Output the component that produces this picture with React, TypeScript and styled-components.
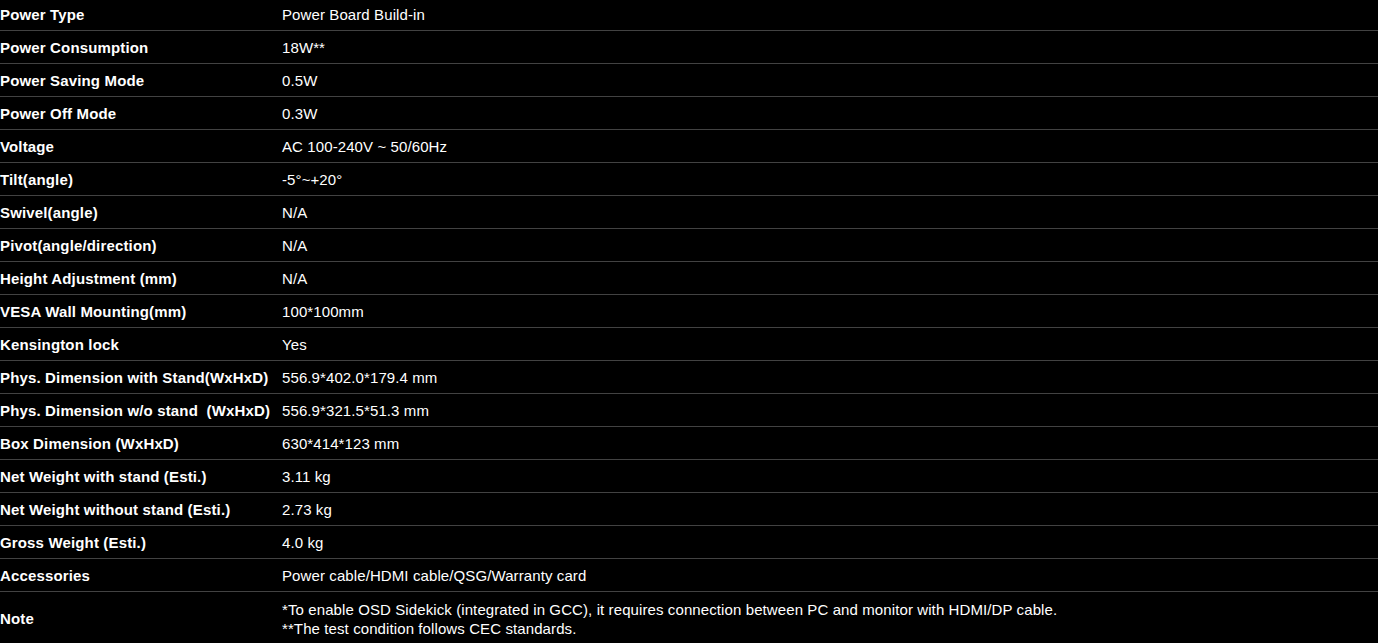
import React from "react";
import styled, { createGlobalStyle } from "styled-components";

const Global = createGlobalStyle`
  html, body { margin: 0; padding: 0; background: #000; }
  body { font-family: "Liberation Sans", Arial, sans-serif; overflow: hidden; }
`;

const Table = styled.div`
  display: flex;
  flex-direction: column;
  margin-top: -2px;
  width: 100%;
  background: #000;
  color: #fff;
  font-size: 15px;
  line-height: 18px;
`;

const Row = styled.div<{ $last?: boolean }>`
  display: grid;
  grid-template-columns: 282px 1fr;
  align-items: center;
  border-bottom: ${(p) => (p.$last ? "none" : "1px solid #424242")};
`;

const Label = styled.div`
  font-weight: 700;
  padding: 8px 0 6px;
  letter-spacing: 0.15px;
  color: #fff;
`;

const Value = styled.div<{ $multi?: boolean }>`
  padding: 8px 0 6px;
  letter-spacing: 0.1px;
  line-height: ${(p) => (p.$multi ? "19px" : "18px")};
  color: #fff;
`;

const rows: [string, React.ReactNode, boolean?][] = [
  ["Power Type", "Power Board Build-in"],
  ["Power Consumption", "18W**"],
  ["Power Saving Mode", "0.5W"],
  ["Power Off Mode", "0.3W"],
  ["Voltage", "AC 100-240V ~ 50/60Hz"],
  ["Tilt(angle)", "-5°~+20°"],
  ["Swivel(angle)", "N/A"],
  ["Pivot(angle/direction)", "N/A"],
  ["Height Adjustment (mm)", "N/A"],
  ["VESA Wall Mounting(mm)", "100*100mm"],
  ["Kensington lock", "Yes"],
  ["Phys. Dimension with Stand(WxHxD)", "556.9*402.0*179.4 mm"],
  ["Phys. Dimension w/o stand\u00a0 (WxHxD)", "556.9*321.5*51.3 mm"],
  ["Box Dimension (WxHxD)", "630*414*123 mm"],
  ["Net Weight with stand (Esti.)", "3.11 kg"],
  ["Net Weight without stand (Esti.)", "2.73 kg"],
  ["Gross Weight (Esti.)", "4.0 kg"],
  ["Accessories", "Power cable/HDMI cable/QSG/Warranty card"],
  [
    "Note",
    <>
      *To enable OSD Sidekick (integrated in GCC), it requires connection between PC and monitor with HDMI/DP cable.
      <br />
      **The test condition follows CEC standards.
    </>,
    true,
  ],
];

export default function App() {
  return (
    <>
      <Global />
      <Table>
        {rows.map(([k, v, multi], i) => (
          <Row key={k} $last={i === rows.length - 1}>
            <Label>{k}</Label>
            <Value $multi={multi}>{v}</Value>
          </Row>
        ))}
      </Table>
    </>
  );
}
